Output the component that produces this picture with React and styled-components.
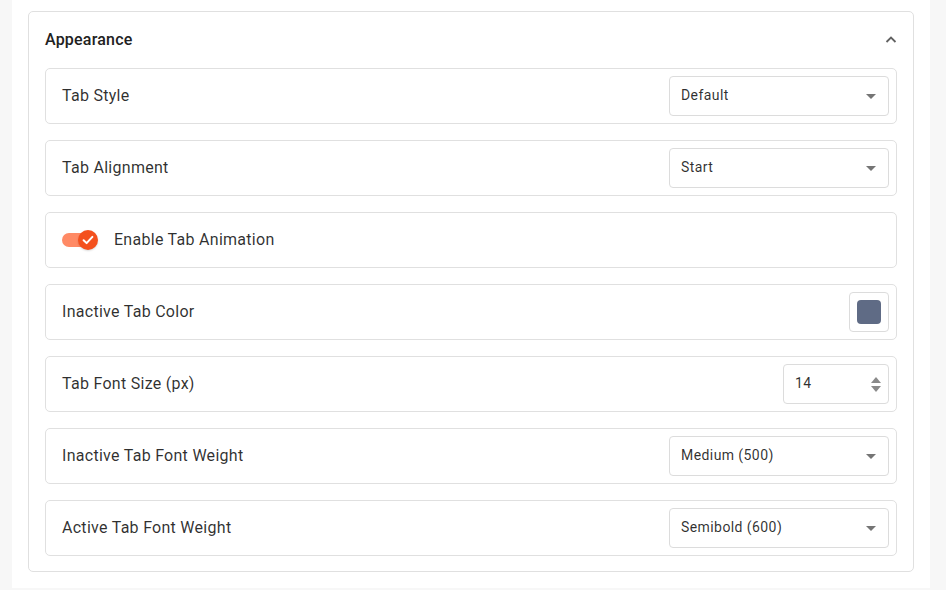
import React from "react";
import styled, { createGlobalStyle } from "styled-components";

const Global = createGlobalStyle`
  html, body { margin: 0; padding: 0; background: #f7f7f7; }
  body { font-family: Roboto, "Noto Sans", Arial, sans-serif; color: #212121; }
  * { box-sizing: border-box; }
`;

const Page = styled.div`
  padding: 0 16px 2px 12px;
  height: 590px;
  overflow: hidden;
`;

const Panel = styled.div`
  background: #ffffff;
  padding: 11px 16px 16px 16px;
  height: 588px;
`;

const Card = styled.section`
  border: 1px solid #e0e0e0;
  border-radius: 5px;
  padding: 0 16px 15px 16px;
`;

const Header = styled.div`
  display: flex;
  align-items: center;
  justify-content: space-between;
  height: 56px;
  padding-bottom: 1px;
`;

const Title = styled.h2`
  margin: 0;
  font-size: 16px;
  font-weight: 500;
  letter-spacing: 0.2px;
  color: #212121;
`;

const IconBtn = styled.span`
  display: flex;
  width: 12px;
  height: 12px;
  color: #616161;
`;

const Rows = styled.div`
  display: flex;
  flex-direction: column;
  gap: 16px;
`;

const Row = styled.div`
  display: flex;
  align-items: center;
  justify-content: space-between;
  height: 56px;
  border: 1px solid #e0e0e0;
  border-radius: 5px;
  padding: 0 7px 0 16px;
`;

const Label = styled.span`
  display: block;
  padding-bottom: 2px;
  font-size: 16px;
  color: rgba(0, 0, 0, 0.82);
  letter-spacing: 0.28px;
`;

const Value = styled.span`
  display: block;
  padding-bottom: 2px;
`;

const SelectBox = styled.div`
  width: 220px;
  height: 40px;
  border: 1px solid #dcdcdc;
  border-radius: 4px;
  display: flex;
  align-items: center;
  justify-content: space-between;
  padding: 0 12px 0 11px;
  font-size: 14px;
  letter-spacing: 0.42px;
  color: rgba(0, 0, 0, 0.82);
`;

const Caret = styled.span`
  width: 0;
  height: 0;
  border-left: 5px solid transparent;
  border-right: 5px solid transparent;
  border-top: 5px solid #757575;
  margin-top: 1px;
`;

const Swatch = styled.div`
  width: 40px;
  height: 40px;
  border: 1px solid #dcdcdc;
  border-radius: 4px;
  display: flex;
  align-items: center;
  justify-content: center;
`;

const Fill = styled.div`
  width: 24px;
  height: 24px;
  border-radius: 4px;
  background: ${(p) => p.$color};
`;

const NumberBox = styled.div`
  width: 106px;
  height: 40px;
  border: 1px solid #dcdcdc;
  border-radius: 4px;
  display: flex;
  align-items: center;
  justify-content: space-between;
  padding: 0 7px 0 11px;
  font-size: 14px;
  letter-spacing: 0.42px;
  color: rgba(0, 0, 0, 0.82);
`;

const Spinner = styled.div`
  display: flex;
  flex-direction: column;
  gap: 3px;
  align-items: center;
  width: 10px;
`;

const Arrow = styled.span`
  width: 0;
  height: 0;
  border-left: 5px solid transparent;
  border-right: 5px solid transparent;
  ${(p) => (p.$up ? "border-bottom: 6px solid #8a8a8a;" : "border-top: 6px solid #8a8a8a;")}
`;

const ToggleRow = styled(Row)`
  justify-content: flex-start;
  gap: 18px;
`;

const Track = styled.span`
  position: relative;
  width: 34px;
  height: 14px;
  border-radius: 7px;
  background: #ff8a65;
`;

const Knob = styled.span`
  position: absolute;
  right: -2px;
  top: -3px;
  width: 20px;
  height: 20px;
  border-radius: 50%;
  background: #f4511e;
  display: flex;
  align-items: center;
  justify-content: center;
  box-shadow: 0 1px 2px rgba(0,0,0,0.15);
`;

const Select = ({ value }) => (
  <SelectBox>
    <Value>{value}</Value>
    <Caret />
  </SelectBox>
);

export default function App() {
  return (
    <>
      <Global />
      <Page>
        <Panel>
          <Card>
            <Header>
              <Title>Appearance</Title>
              <IconBtn>
                <svg width="12" height="12" viewBox="0 0 12 12">
                  <path d="M1.5 8 L6 3.5 L10.5 8" fill="none" stroke="currentColor" strokeWidth="1.8" />
                </svg>
              </IconBtn>
            </Header>
            <Rows>
              <Row>
                <Label>Tab Style</Label>
                <Select value="Default" />
              </Row>
              <Row>
                <Label>Tab Alignment</Label>
                <Select value="Start" />
              </Row>
              <ToggleRow>
                <Track>
                  <Knob>
                    <svg width="14" height="14" viewBox="0 0 14 14">
                      <path d="M2.6 7.2 L5.6 10.1 L11.4 3.9" fill="none" stroke="#fff" strokeWidth="2" strokeLinecap="round" strokeLinejoin="round" />
                    </svg>
                  </Knob>
                </Track>
                <Label>Enable Tab Animation</Label>
              </ToggleRow>
              <Row>
                <Label>Inactive Tab Color</Label>
                <Swatch>
                  <Fill $color="#5f6b85" />
                </Swatch>
              </Row>
              <Row>
                <Label>Tab Font Size (px)</Label>
                <NumberBox>
                  <Value>14</Value>
                  <Spinner>
                    <Arrow $up />
                    <Arrow />
                  </Spinner>
                </NumberBox>
              </Row>
              <Row>
                <Label>Inactive Tab Font Weight</Label>
                <Select value="Medium (500)" />
              </Row>
              <Row>
                <Label>Active Tab Font Weight</Label>
                <Select value="Semibold (600)" />
              </Row>
            </Rows>
          </Card>
        </Panel>
      </Page>
    </>
  );
}
